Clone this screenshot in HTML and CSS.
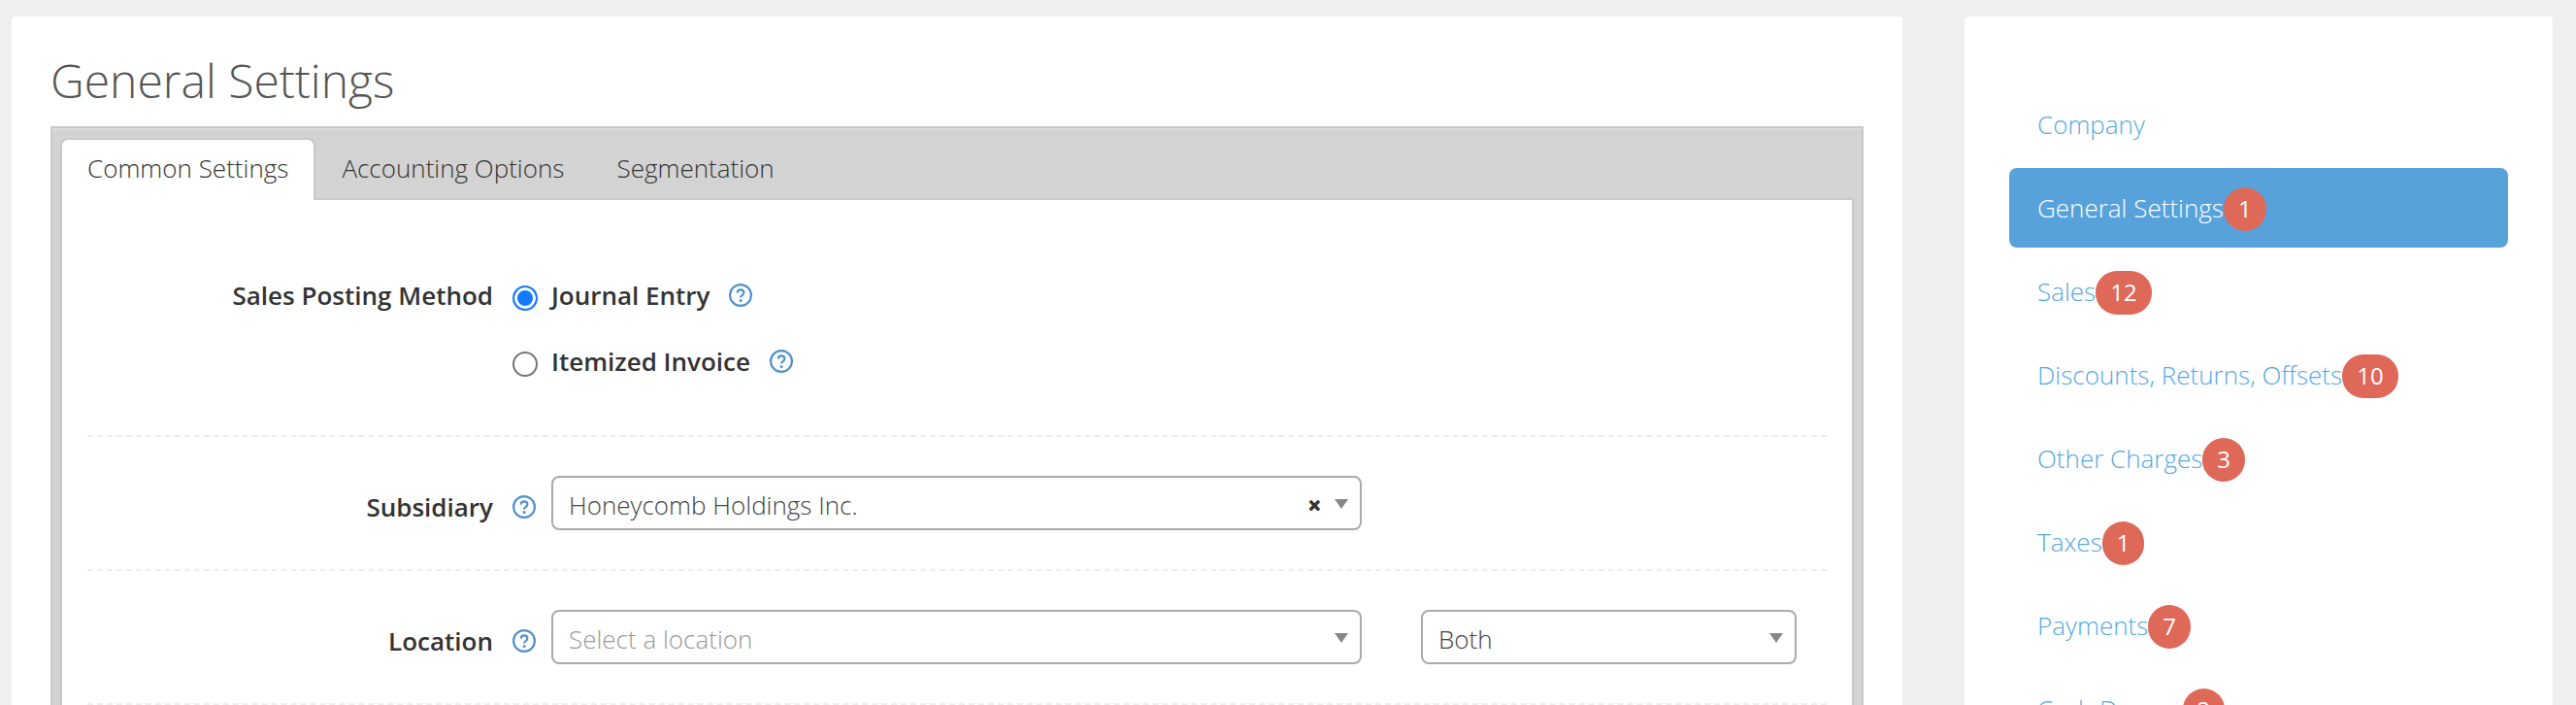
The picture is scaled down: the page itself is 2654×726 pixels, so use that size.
FILE: index.html
```
<!DOCTYPE html>
<html lang="en">
<head>
  <meta charset="UTF-8" />
  <meta name="viewport" content="width=device-width, initial-scale=1.0"/>
  <title>General Settings</title>
  <link rel="stylesheet" href="styles.css">
</head>

<body>
  <!-- help icon, reused by every field -->
  <svg class="sprite" aria-hidden="true">
    <symbol id="help" viewBox="0 0 24 24">
      <circle cx="12" cy="12" r="10.9" fill="none" stroke="currentColor" stroke-width="2.2"/>
      <path d="M8.7 9.6C8.8 7.6 10.1 6.4 12 6.4c2 0 3.4 1.2 3.4 2.9 0 1.4-.8 2.1-1.8 2.8-1 .7-1.5 1.1-1.5 2.4" fill="none" stroke="currentColor" stroke-width="2.2"/>
      <circle cx="12.1" cy="17.6" r="1.5" fill="currentColor"/>
    </symbol>
  </svg>

  <div class="page">
    <main class="panel main">
      <h1>General Settings</h1>

      <div class="tabs">
        <div class="tab-list" role="tablist">
          <button class="tab active" role="tab" aria-selected="true">Common Settings</button>
          <button class="tab" role="tab" aria-selected="false">Accounting Options</button>
          <button class="tab" role="tab" aria-selected="false">Segmentation</button>
        </div>

        <form class="tab-content">
          <div class="row row-radios" role="radiogroup" aria-labelledby="methodLabel">
            <span class="label" id="methodLabel">Sales Posting Method</span>
            <div class="radios">
              <div class="radio">
                <input type="radio" name="method" id="journal" checked>
                <label for="journal">Journal Entry</label>
                <button type="button" class="help" aria-label="Help"><svg><use href="#help"/></svg></button>
              </div>
              <div class="radio">
                <input type="radio" name="method" id="invoice">
                <label for="invoice">Itemized Invoice</label>
                <button type="button" class="help" aria-label="Help"><svg><use href="#help"/></svg></button>
              </div>
            </div>
          </div>

          <div class="row">
            <label class="label" for="subsidiary">Subsidiary</label>
            <button type="button" class="help" aria-label="Help"><svg><use href="#help"/></svg></button>
            <div class="select">
              <select id="subsidiary">
                <option>Honeycomb Holdings Inc.</option>
              </select>
              <button type="button" class="clear" aria-label="Clear">×</button>
            </div>
          </div>

          <div class="row">
            <label class="label" for="location">Location</label>
            <button type="button" class="help" aria-label="Help"><svg><use href="#help"/></svg></button>
            <div class="select">
              <select id="location" class="placeholder">
                <option>Select a location</option>
              </select>
            </div>
            <div class="select scope">
              <select aria-label="Location scope">
                <option>Both</option>
              </select>
            </div>
          </div>
        </form>
      </div>
    </main>

    <nav class="panel sidebar">
      <a href="#">Company</a>
      <a href="#" class="active">General Settings<span class="badge">1</span></a>
      <a href="#">Sales<span class="badge">12</span></a>
      <a href="#">Discounts, Returns, Offsets<span class="badge">10</span></a>
      <a href="#">Other Charges<span class="badge">3</span></a>
      <a href="#">Taxes<span class="badge">1</span></a>
      <a href="#">Payments<span class="badge">7</span></a>
      <a href="#">Cash Drawer<span class="badge">2</span></a>
    </nav>
  </div>
</body>
</html>
```
FILE: styles.css
```
* {
  box-sizing: border-box;
}
body {
  margin: 0;
  height: 100vh;
  overflow: hidden;
  background: #efefef;
  color: #333;
  font-family: 'Open Sans', sans-serif;
  font-size: 26px;
  font-weight: 300;
  line-height: 36px;
}
button, select {
  font: inherit;
  color: inherit;
}
button {
  padding: 0;
  border: none;
  background: none;
  cursor: pointer;
}
.sprite {
  display: none;
}
.page {
  display: grid;
  grid-template-columns: minmax(0, 1948fr) minmax(0, 606fr);
  gap: 64px;
  min-height: 100vh;
  padding: 17px 24px 0 12px;
}
.panel {
  background: #fff;
  border-radius: 4px;
  box-shadow: 0 0 2px rgba(0, 0, 0, 0.06);
}
.main {
  display: flex;
  flex-direction: column;
  padding: 32px 40px 0;
}
h1 {
  margin: 0 0 13px;
  color: #555;
  font-size: 48px;
  font-weight: 300;
  line-height: 68px;
}

/* tabs */
.tabs {
  flex: 1;
  display: flex;
  flex-direction: column;
  padding: 0 10px;
  background: #d3d3d3;
  border: 2px solid #c9c9c9;
  border-bottom: none;
  box-shadow: inset 0 2px #dcdcdc;
}
.tab-list {
  display: flex;
  padding-top: 10px;
}
.tab {
  height: 62px;
  padding: 0 25px 2px;
  border: 2px solid transparent;
  border-bottom: none;
  border-radius: 8px 8px 0 0;
}
.tab.active {
  margin-left: -2px;
  margin-bottom: -2px;
  height: 64px;
  padding: 0 26px 4px;
  background: #fff;
  border-color: #c9c9c9;
  z-index: 1;
}
.tab-content {
  flex: 1;
  margin: 0 -2px;
  padding: 0 26px;
  background: #fff;
  border: 2px solid #c9c9c9;
  border-bottom: none;
}

/* form rows */
.row {
  display: grid;
  grid-template-columns: minmax(0, 418fr) 60px minmax(0, 835fr) minmax(0, 448fr);
  align-items: start;
  padding: 40px 31px 40px 0;
  border-bottom: 2px dashed #eee;
}
.label {
  padding-top: 14px;
  text-align: right;
}
.label, .radio label {
  font-weight: 600;
}
.help {
  width: 24px;
  height: 24px;
  color: #5090cd;
}
.help svg {
  display: block;
  width: 24px;
  height: 24px;
}
.row > .help {
  margin: 20px 0 0 20px;
}
.row-radios {
  padding-top: 80px;
  padding-bottom: 58px;
}
.row-radios .label {
  padding-top: 0;
}
.radios {
  grid-column: 2 / -1;
  display: flex;
  flex-direction: column;
  gap: 32px;
  padding-left: 20px;
}
.radio {
  display: flex;
  align-items: center;
}
.radio label {
  margin: 0 20px 0 14px;
}
.radio input {
  appearance: none;
  width: 26px;
  height: 26px;
  margin: 6px 0 0;
  border: 2px solid #767676;
  border-radius: 50%;
}
.radio input:checked {
  border-color: #147aff;
  background: #147aff;
  box-shadow: inset 0 0 0 3px #fff;
}

/* selects */
.select {
  position: relative;
}
.select select {
  appearance: none;
  display: block;
  width: 100%;
  height: 56px;
  padding: 4px 56px 0 16px;
  border: 2px solid #aaa;
  border-radius: 8px;
  background: #fff;
  color: #444;
}
.select .placeholder {
  color: #999;
}
.select::after {
  content: '';
  position: absolute;
  top: 24px;
  right: 14px;
  border: 7px solid transparent;
  border-top: 10px solid #888;
  border-bottom: none;
  pointer-events: none;
}
.scope {
  margin-left: 61px;
}
.clear {
  position: absolute;
  top: 12px;
  right: 41px;
  color: #333;
  font-weight: 800;
}

/* sidebar */
.sidebar {
  display: flex;
  flex-direction: column;
  gap: 4px;
  padding: 70px 46px 46px;
}
.sidebar a {
  display: flex;
  align-items: center;
  height: 82px;
  padding: 0 29px;
  border-radius: 8px;
  color: #56a9e3;
  text-decoration: none;
}
.sidebar a.active {
  background: #58a2db;
  color: #fff;
}
.badge {
  margin-top: 3px;
  padding: 0 15px 2px;
  border-radius: 22px;
  background: #df6959;
  color: #fff;
  font-size: 24px;
  font-weight: 500;
  line-height: 43px;
}
```
